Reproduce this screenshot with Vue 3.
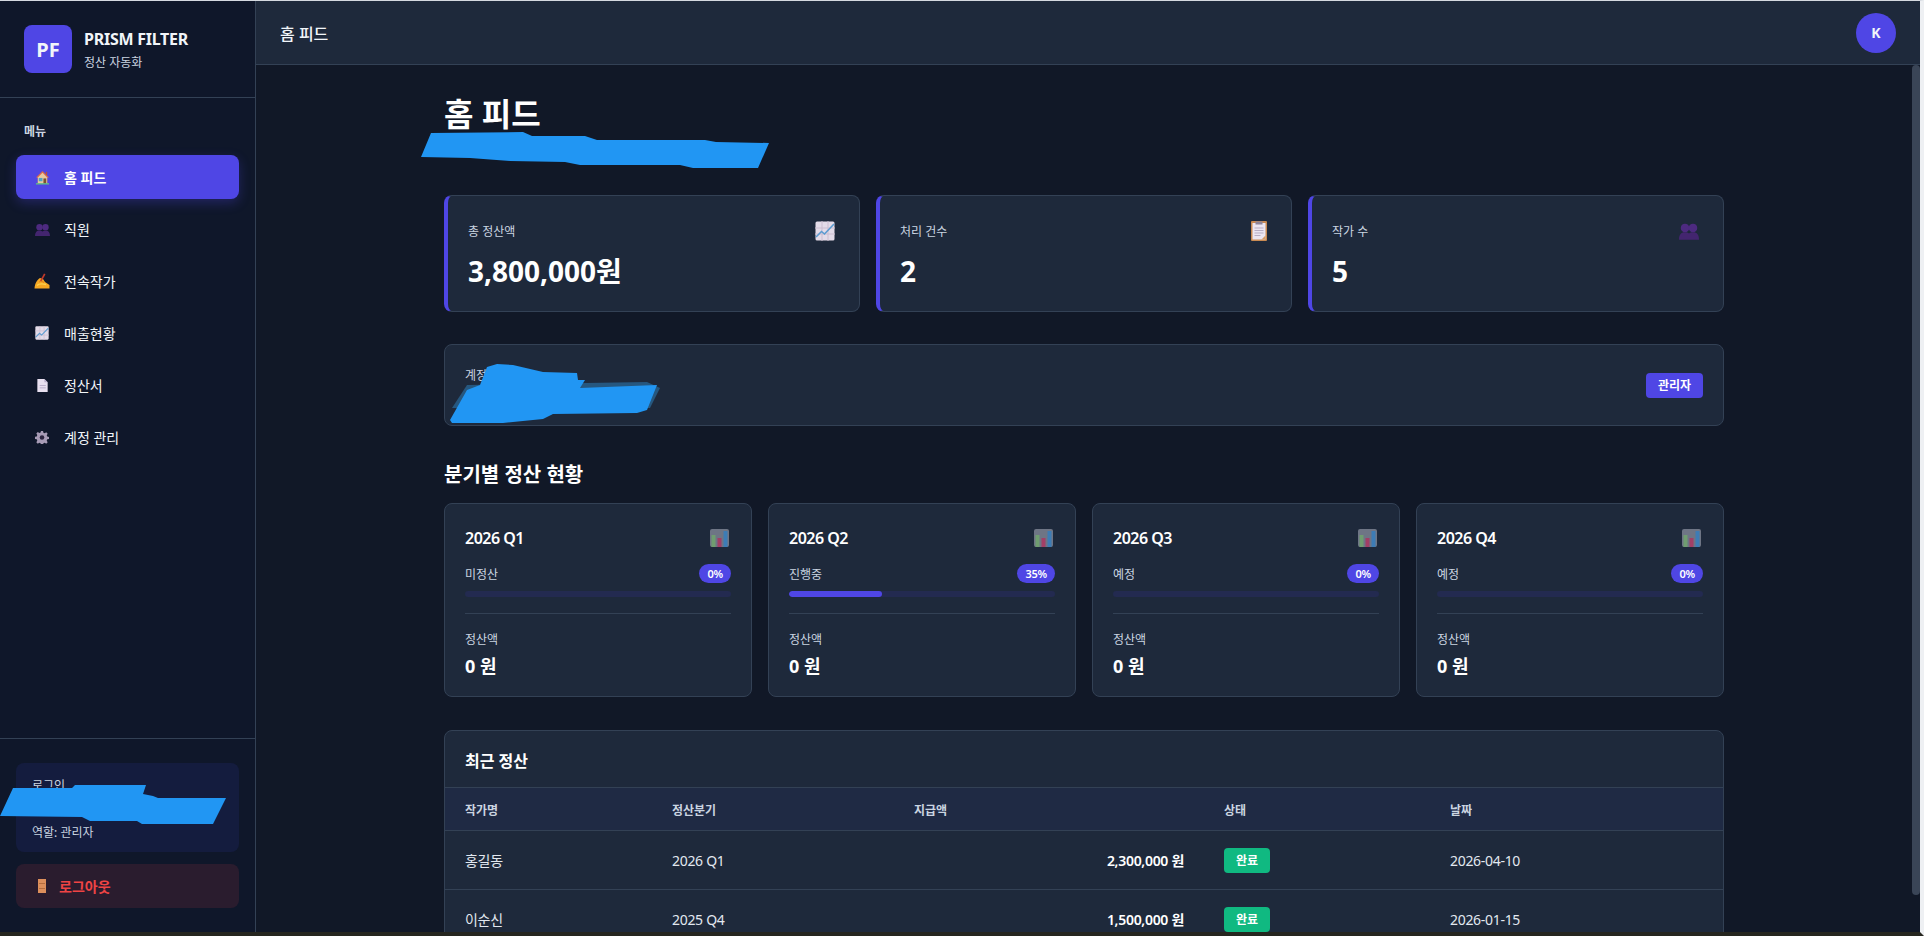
<template>
  <div class="frame">
    <!-- emoji sprites, the sandbox has no colour emoji font -->
    <svg class="sprites" width="0" height="0" aria-hidden="true">
      <defs>
        <symbol id="i-house" viewBox="0 0 16 16">
          <path d="M8 1 1 8h2v7h10V8h2z" fill="#d9694a" />
          <path d="M3 8 8 3l5 5v7H3z" fill="#e8c9a0" />
          <rect x="9" y="9" width="3" height="6" fill="#7a5230" />
          <rect x="4" y="8.500" width="4" height="3.500" fill="#4fa3c7" />
          <rect x="1" y="14" width="14" height="1.500" fill="#5fb98a" />
          <rect x="11.500" y="2" width="1.500" height="3.500" fill="#b5533c" />
        </symbol>
        <symbol id="i-people" viewBox="0 0 16 16">
          <circle cx="4.800" cy="5.500" r="3.400" fill="#4d2a80" />
          <circle cx="11.200" cy="5.500" r="3.400" fill="#4d2a80" />
          <path d="M0 15c0-4 1.500-6 4.800-6 1.300 0 2.400.4 3.200 1 .8-.6 1.900-1 3.200-1 3.300 0 4.800 2 4.800 6z" fill="#43256f" />
        </symbol>
        <symbol id="i-hand" viewBox="0 0 16 16">
          <path d="M.5 15.500C1 10 3 7 6 5l3 1 2 3 4.500 3v3.500z" fill="#f7a823" />
          <path d="M10 .5 11.500 1.200 7.500 8.500 6 7.800z" fill="#c0392b" />
          <path d="M3 12.500c2-2 5-2 9-1" stroke="#fbd24f" stroke-width="1.400" fill="none" />
          <path d="M5 9c2-1 3-1 5 .5" stroke="#e07f1c" stroke-width="1" fill="none" />
        </symbol>
        <symbol id="i-chart" viewBox="0 0 20 20">
          <rect x="0.500" y="0.500" width="19" height="19" rx="1.500" fill="#e3dbe8" />
          <path d="M0 7h20M0 13h20M7 0v20M13 0v20" stroke="#cbbdd0" stroke-width="1" />
          <path d="M1 16 6.500 10.500 9.500 13 19 3" stroke="#5b9bd0" stroke-width="1.600" fill="none" />
        </symbol>
        <symbol id="i-doc" viewBox="0 0 16 16">
          <path d="M2.500 1H10l3.500 3.500V15h-11z" fill="#e8e0f0" />
          <path d="M10 1v3.500h3.500z" fill="#b9aecb" />
          <path d="M5 8h6.500M5 10.500h6.500" stroke="#b9aecb" stroke-width="1" />
        </symbol>
        <symbol id="i-gear" viewBox="0 0 16 16">
          <path d="M6.800 1h2.400l.4 2 1.500.7 1.700-1.100 1.700 1.700-1.100 1.700.6 1.500 2 .4v2.400l-2 .4-.6 1.500 1.100 1.700-1.700 1.700-1.700-1.100-1.500.6-.4 2H6.800l-.4-2-1.500-.6-1.700 1.100-1.700-1.700 1.100-1.700-.6-1.500-2-.4V7.700l2-.4.6-1.500L1.500 4.100l1.700-1.700 1.700 1.100 1.500-.6z" fill="#a79bb5" />
          <circle cx="8" cy="8.500" r="2.600" fill="#2c2540" />
        </symbol>
        <symbol id="i-door" viewBox="0 0 8 14">
          <rect width="8" height="14" fill="#dc8f5c" />
          <path d="M1 4.500h6M1 9.500h6" stroke="#b56d3e" stroke-width="1" />
        </symbol>
        <symbol id="i-clip" viewBox="0 0 16 20">
          <rect width="16" height="20" rx="1" fill="#c98a52" />
          <rect x="1.500" y="2" width="13" height="16.500" fill="#ece6f2" />
          <rect x="4.500" y="0.500" width="7" height="3" fill="#8d8499" />
          <path d="M3.500 7h9M3.500 9.500h9M3.500 12h9M3.500 14.500h6" stroke="#b7adc4" stroke-width="1" />
          <path d="M10.500 18.500 14.500 14.500v4z" fill="#d59a63" />
        </symbol>
        <symbol id="i-bars" viewBox="0 0 19 18">
          <rect width="19" height="18" rx="2" fill="#6e7585" />
          <rect x="1.500" y="6" width="4" height="12" fill="#6f9d70" />
          <rect x="7.500" y="9" width="4" height="9" fill="#a23f66" />
          <rect x="13.500" y="2" width="4" height="16" fill="#3d7cb5" />
        </symbol>
      </defs>
    </svg>

    <aside class="sidebar">
      <div class="brand">
        <div class="brand-logo">PF</div>
        <div class="brand-text">
          <div class="brand-name">PRISM FILTER</div>
          <div class="brand-sub">정산 자동화</div>
        </div>
      </div>

      <nav class="nav">
        <div class="nav-label">메뉴</div>
        <a
          v-for="item in menu"
          :key="item.label"
          class="nav-item"
          :class="{ active: item.active }"
        >
          <span class="nav-icon"><svg :width="item.size" :height="item.size"><use :href="item.icon" /></svg></span>
          {{ item.label }}
        </a>
      </nav>

      <div class="side-foot">
        <div class="user-box">
          <div class="user-line">로그인</div>
          <div class="user-name"></div>
          <div class="user-line">역할: 관리자</div>
        </div>
        <button class="logout">
          <span class="nav-icon"><svg width="8" height="14"><use href="#i-door" /></svg></span>
          로그아웃
        </button>
      </div>
    </aside>

    <div class="content">
      <header class="topbar">
        <div class="topbar-title">홈 피드</div>
        <div class="avatar">K</div>
      </header>

      <div class="body">
        <main class="scroll">
          <div class="page">
            <h1 class="page-title">홈 피드</h1>
            <div class="page-sub"></div>

            <section class="stats">
              <div v-for="s in stats" :key="s.label" class="stat">
                <div class="stat-top">
                  <span class="stat-label">{{ s.label }}</span>
                  <svg class="stat-icon" :width="s.w" height="20"><use :href="s.icon" /></svg>
                </div>
                <div class="stat-value">{{ s.value }}</div>
              </div>
            </section>

            <section class="account">
              <div>
                <div class="account-label">계정</div>
                <div class="account-name"></div>
              </div>
              <span class="role">관리자</span>
            </section>

            <h2 class="section-title">분기별 정산 현황</h2>
            <section class="quarters">
              <div v-for="q in quarters" :key="q.name" class="quarter">
                <div class="q-head">
                  <span class="q-name">{{ q.name }}</span>
                  <svg class="q-icon" width="19" height="18"><use href="#i-bars" /></svg>
                </div>
                <div class="q-status">
                  <span>{{ q.status }}</span>
                  <span class="pill">{{ q.progress }}%</span>
                </div>
                <div class="track">
                  <div class="fill" :style="{ width: q.progress + '%' }"></div>
                </div>
                <div class="q-label">정산액</div>
                <div class="q-amount">{{ q.amount }} 원</div>
              </div>
            </section>

            <section class="recent">
              <div class="recent-title">최근 정산</div>
              <table class="table">
                <colgroup>
                  <col class="col-name" />
                  <col class="col-quarter" />
                  <col class="col-amount" />
                  <col class="col-status" />
                  <col />
                </colgroup>
                <thead>
                  <tr>
                    <th>작가명</th>
                    <th>정산분기</th>
                    <th>지급액</th>
                    <th>상태</th>
                    <th>날짜</th>
                  </tr>
                </thead>
                <tbody>
                  <tr v-for="r in rows" :key="r.name">
                    <td>{{ r.name }}</td>
                    <td>{{ r.quarter }}</td>
                    <td class="amount">{{ r.amount }} 원</td>
                    <td><span class="done">완료</span></td>
                    <td>{{ r.date }}</td>
                  </tr>
                </tbody>
              </table>
            </section>
          </div>
        </main>
        <!-- headless chrome hides native scrollbars, so the bar is drawn -->
        <div class="rail"><div class="thumb"></div></div>
      </div>
    </div>

    <!-- blue marker strokes painted over the screenshot -->
    <svg class="marker" width="1924" height="936" aria-hidden="true">
      <path fill="#2196f3" d="M421 157 431 133 523 132 532 136 585 136 597 140 705 140 716 142 769 143 758 168 693 168 680 165 580 165 565 162 510 161 470 158z" />
      <path fill="#26577f" d="M467 385 647 382 660 388 650 408 452 408z" />
      <path fill="#2196f3" d="M487 367 497 364 513 365 543 372 577 373 578 380 585 380 580 388 657 385 647 410 637 413 553 414 543 419 503 423 452 423 450 420 467 390 480 385z" />
      <path fill="#2196f3" d="M0 816 13 788 72 788 75 785 146 785 143 794 153 796 158 798 226 798 213 824 142 824 137 821 90 821 82 817z" />
    </svg>
  </div>
</template>

<script setup>
const menu = [
  { label: "홈 피드", icon: "#i-house", size: 15, active: true },
  { label: "직원", icon: "#i-people", size: 15 },
  { label: "전속작가", icon: "#i-hand", size: 16 },
  { label: "매출현황", icon: "#i-chart", size: 14 },
  { label: "정산서", icon: "#i-doc", size: 15 },
  { label: "계정 관리", icon: "#i-gear", size: 14 },
];

const stats = [
  { label: "총 정산액", value: "3,800,000원", icon: "#i-chart", w: 20 },
  { label: "처리 건수", value: "2", icon: "#i-clip", w: 16 },
  { label: "작가 수", value: "5", icon: "#i-people", w: 20 },
];

const quarters = [
  { name: "2026 Q1", status: "미정산", progress: 0, amount: 0 },
  { name: "2026 Q2", status: "진행중", progress: 35, amount: 0 },
  { name: "2026 Q3", status: "예정", progress: 0, amount: 0 },
  { name: "2026 Q4", status: "예정", progress: 0, amount: 0 },
];

const rows = [
  { name: "홍길동", quarter: "2026 Q1", amount: "2,300,000", date: "2026-04-10" },
  { name: "이순신", quarter: "2025 Q4", amount: "1,500,000", date: "2026-01-15" },
];
</script>

<style>
html,
body {
  margin: 0;
  height: 100%;
  overflow: hidden;
  background: #1f1f1f;
}
</style>

<style scoped>
.frame {
  position: relative;
  display: flex;
  box-sizing: border-box;
  height: 936px;
  border-top: 1px solid #d5d9e0;
  border-bottom: 4px solid #26261f;
  border-right: 4px solid #eef0f3;
  overflow: hidden;
  font-family: "Noto Sans", "Noto Sans CJK KR", sans-serif;
  color: #f1f5f9;
}

.sprites {
  position: absolute;
}

.marker {
  position: absolute;
  top: -1px;
  left: 0;
  pointer-events: none;
}

/* sidebar */
.sidebar {
  flex: 0 0 256px;
  box-sizing: border-box;
  display: flex;
  flex-direction: column;
  background: #0f172a;
  border-right: 1px solid #334155;
}

.brand {
  display: flex;
  align-items: center;
  gap: 12px;
  height: 97px;
  box-sizing: border-box;
  padding: 0 24px;
  border-bottom: 1px solid #334155;
}

.brand-logo {
  width: 48px;
  height: 48px;
  border-radius: 8px;
  background: #4f46e5;
  display: flex;
  align-items: center;
  justify-content: center;
  font-size: 20px;
  font-weight: 700;
}

.brand-text {
  padding-top: 1px;
}

.brand-name {
  font-size: 16px;
  font-weight: 700;
  line-height: 22px;
  letter-spacing: -0.25px;
}

.brand-sub {
  font-size: 12px;
  line-height: 18px;
  margin-top: 4px;
  color: #cbd5e1;
}

.nav {
  flex: 1;
  padding: 24px 16px;
  display: flex;
  flex-direction: column;
  gap: 8px;
}

.nav-label {
  font-size: 12px;
  font-weight: 600;
  line-height: 18px;
  color: #cbd5e1;
  padding: 1px 0 0 8px;
  margin-bottom: 6px;
}

.nav-item {
  display: flex;
  align-items: center;
  gap: 12px;
  height: 44px;
  padding: 0 16px;
  border-radius: 8px;
  font-size: 14px;
  color: #f1f5f9;
}

.nav-item.active {
  background: #4f46e5;
  font-weight: 600;
  color: #fff;
  box-shadow: 0 4px 12px rgba(79, 70, 229, 0.3);
}

.nav-icon {
  flex: 0 0 20px;
  display: flex;
  align-items: center;
  justify-content: center;
}

.side-foot {
  padding: 24px 16px;
  border-top: 1px solid #334155;
}

.user-box {
  box-sizing: border-box;
  height: 89px;
  padding: 14px 16px;
  border-radius: 8px;
  background: #141c3e;
}

.user-line {
  font-size: 12px;
  line-height: 18px;
  color: #cbd5e1;
}

.user-name {
  height: 29px;
}

.logout {
  display: flex;
  align-items: center;
  gap: 7px;
  width: 100%;
  height: 44px;
  margin-top: 12px;
  padding: 0 16px;
  border: none;
  border-radius: 8px;
  background: #2a1c2e;
  color: #ef4444;
  font-family: inherit;
  font-size: 14px;
  font-weight: 600;
}

/* right side */
.content {
  flex: 1;
  min-width: 0;
  display: flex;
  flex-direction: column;
  background: #111827;
}

.topbar {
  flex: 0 0 64px;
  box-sizing: border-box;
  display: flex;
  align-items: center;
  justify-content: space-between;
  padding: 0 24px;
  background: #1e293b;
  border-bottom: 1px solid #334155;
}

.topbar-title {
  font-size: 16px;
  font-weight: 500;
}

.avatar {
  width: 40px;
  height: 40px;
  border-radius: 50%;
  background: #4f46e5;
  display: flex;
  align-items: center;
  justify-content: center;
  font-size: 14px;
  font-weight: 700;
}

.body {
  flex: 1;
  min-height: 0;
  display: flex;
}

.scroll {
  flex: 1;
  min-width: 0;
  overflow: hidden;
  padding: 32px;
}

.rail {
  flex: 0 0 8px;
}

.thumb {
  height: 830px;
  border-radius: 4px;
  background: #3a4557;
}

.page {
  max-width: 1280px;
  margin: 0 auto;
}

.page-title {
  margin: 0 0 7px;
  padding-top: 1px;
  font-size: 32px;
  font-weight: 700;
  line-height: 32px;
  color: #fff;
}

.page-sub {
  height: 26px;
  margin-bottom: 32px;
}

.stats {
  display: grid;
  grid-template-columns: repeat(3, 1fr);
  gap: 16px;
  margin-bottom: 32px;
}

.stat {
  box-sizing: border-box;
  height: 117px;
  padding: 25px 24px 24px 20px;
  background: #1e293b;
  border: 1px solid #334155;
  border-left: 4px solid #4f46e5;
  border-radius: 8px;
}

.stat-top {
  display: flex;
  align-items: flex-start;
  justify-content: space-between;
  height: 20px;
}

.stat-label {
  font-size: 12px;
  line-height: 22px;
  color: #cbd5e1;
}

.stat-value {
  margin-top: 14px;
  font-size: 28px;
  font-weight: 700;
  line-height: 33px;
  color: #fff;
}

.account {
  box-sizing: border-box;
  height: 82px;
  display: flex;
  align-items: center;
  justify-content: space-between;
  padding: 20px;
  margin-bottom: 32px;
  background: #1e293b;
  border: 1px solid #334155;
  border-radius: 8px;
}

.account-label {
  font-size: 12px;
  line-height: 18px;
  color: #cbd5e1;
}

.account-name {
  height: 18px;
}

.role {
  display: flex;
  align-items: center;
  height: 25px;
  padding: 0 12px;
  border-radius: 4px;
  background: #4f46e5;
  font-size: 12px;
  font-weight: 600;
  color: #fff;
}

.section-title {
  margin: 0 0 14px;
  padding-top: 2px;
  font-size: 20px;
  font-weight: 600;
  line-height: 29px;
  color: #fff;
}

.quarters {
  display: grid;
  grid-template-columns: repeat(4, 1fr);
  gap: 16px;
  margin-bottom: 33px;
}

.quarter {
  box-sizing: border-box;
  height: 194px;
  padding: 20px;
  background: #1e293b;
  border: 1px solid #334155;
  border-radius: 8px;
}

.q-head {
  display: flex;
  align-items: center;
  justify-content: space-between;
  height: 28px;
}

.q-name {
  font-size: 16px;
  font-weight: 600;
  letter-spacing: -0.5px;
  color: #fff;
}

.q-icon {
  margin-right: 2px;
}

.q-status {
  display: flex;
  align-items: center;
  justify-content: space-between;
  height: 19px;
  margin-top: 12px;
  font-size: 12px;
  color: #cbd5e1;
}

.pill {
  padding: 0 8px;
  border-radius: 10px;
  background: #4f46e5;
  font-size: 11px;
  font-weight: 600;
  line-height: 19px;
  letter-spacing: -0.2px;
  color: #fff;
}

.track {
  height: 6px;
  margin-top: 8px;
  border-radius: 3px;
  background: #232a50;
  overflow: hidden;
}

.fill {
  height: 100%;
  border-radius: 3px;
  background: #4f46e5;
}

.q-label {
  margin-top: 16px;
  padding-top: 17px;
  border-top: 1px solid #334155;
  font-size: 12px;
  line-height: 18px;
  color: #cbd5e1;
}

.q-amount {
  margin-top: 4px;
  font-size: 18px;
  font-weight: 700;
  line-height: 26px;
  color: #fff;
}

.recent {
  background: #1e293b;
  border: 1px solid #334155;
  border-radius: 8px;
  overflow: hidden;
}

.recent-title {
  box-sizing: border-box;
  height: 56px;
  padding: 2px 20px 0;
  display: flex;
  align-items: center;
  font-size: 16px;
  font-weight: 600;
  color: #fff;
}

.table {
  width: 100%;
  table-layout: fixed;
  border-collapse: collapse;
}

.col-name {
  width: 207px;
}

.col-quarter {
  width: 242px;
}

.col-amount {
  width: 310px;
}

.col-status {
  width: 226px;
}

.table th {
  height: 40px;
  padding: 2px 20px 0;
  text-align: left;
  font-size: 12px;
  font-weight: 600;
  color: #cbd5e1;
  background: #1f2a44;
  border-top: 1px solid #334155;
  border-bottom: 1px solid #334155;
}

.table td {
  height: 58px;
  padding: 0 20px;
  font-size: 14px;
  letter-spacing: -0.3px;
  color: #e2e8f0;
  border-bottom: 1px solid #334155;
}

.table td.amount {
  text-align: right;
  font-weight: 600;
  color: #fff;
}

.done {
  display: inline-flex;
  align-items: center;
  height: 25px;
  padding: 0 12px;
  border-radius: 4px;
  background: #10b981;
  font-size: 12px;
  font-weight: 600;
  letter-spacing: 0;
  color: #fff;
}
</style>
